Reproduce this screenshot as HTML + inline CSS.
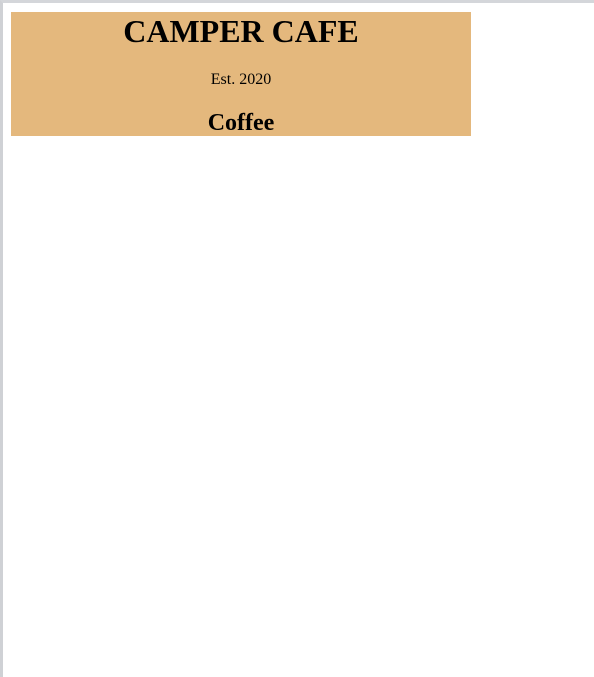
<!DOCTYPE html>
<html><head><style>
html,body{margin:0;padding:0;background:#fff;}
.frame{position:absolute;left:0;top:0;width:594px;height:677px;border-top:3px solid #d4d6da;border-left:3px solid #cfd1d5;box-sizing:border-box;}
.box{position:absolute;left:11px;top:12px;width:460px;height:124px;background:#e4b87d;font-family:"Liberation Serif",serif;text-align:center;color:#000;}
.box div{position:absolute;left:0;width:100%;}
h1{margin:0;font-size:32px;line-height:37px;}
</style></head><body>
<div class="frame"></div>
<div class="box">
<div style="top:1px"><h1>CAMPER CAFE</h1></div>
<div style="top:59px;font-size:16px;line-height:18px">Est. 2020</div>
<div style="top:97px;font-size:24px;line-height:28px;font-weight:bold">Coffee</div>
</div>
</body></html>
